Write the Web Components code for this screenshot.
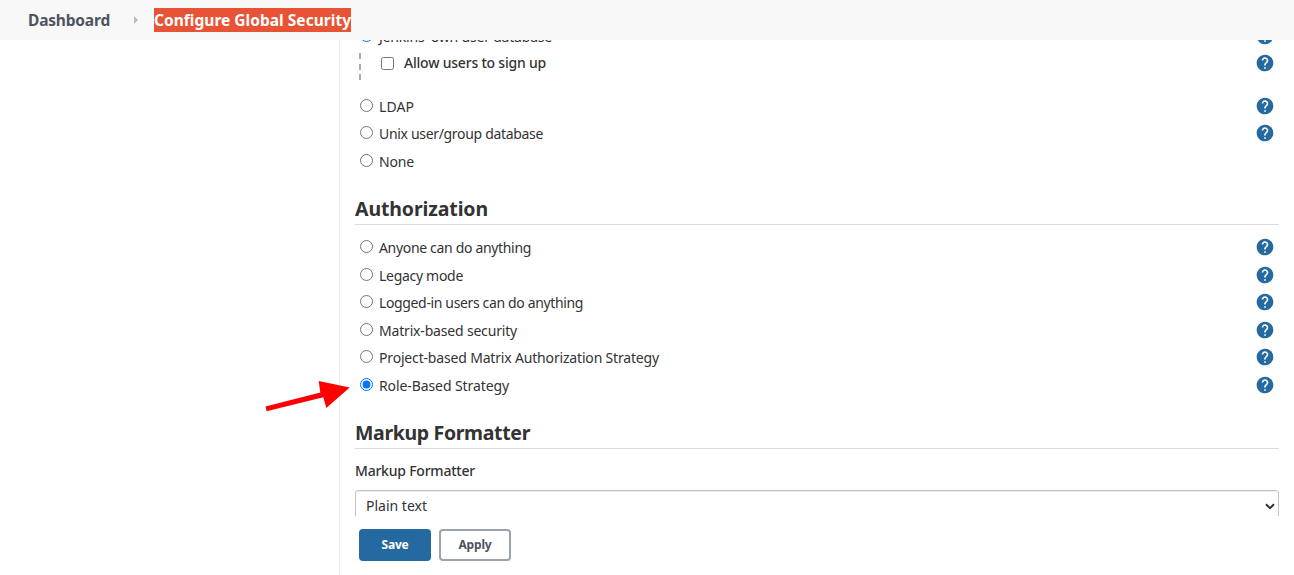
<!DOCTYPE html>
<html lang="en">
<head>
<meta charset="utf-8">
<title>Configure Global Security</title>
<style>
html,body{margin:0;height:100%;overflow:hidden;background:#fff}
body{font-family:"Noto Sans","Open Sans",sans-serif;color:#333;font-size:14px}
</style>
</head>
<body>
<security-page></security-page>
<script>
function define(name, html, ready) {
  const t = document.createElement('template');
  t.innerHTML = html;
  customElements.define(name, class extends HTMLElement {
    connectedCallback() {
      if (this.shadowRoot) return;
      this.attachShadow({mode: 'open'}).appendChild(t.content.cloneNode(true));
      if (ready) ready(this, this.shadowRoot);
    }
  });
}

/* A one-line text that tracks its letters to fill the width in `w`. */
define('fit-text', `<style>
:host{display:inline-block;white-space:nowrap;line-height:1.3}
</style><slot></slot>`, el => {
  const n = el.textContent.length;
  const natural = el.getBoundingClientRect().width;
  const w = Number(el.getAttribute('w'));
  if (w && natural) {
    el.style.letterSpacing = ((w - natural) / n) + 'px';
    el.style.width = w + 'px';
  }
});

define('help-icon', `<style>
:host{display:block;width:20px;height:20px;margin-bottom:.7px}
svg{display:block;width:100%;height:100%}
</style>
<svg viewBox="0 0 24 24" fill="#24699f"><path d="M12 2C6.48 2 2 6.48 2 12s4.48 10 10 10 10-4.48 10-10S17.52 2 12 2zm1 17h-2v-2h2v2zm2.07-7.75l-.9.92C13.45 12.9 13 13.5 13 15h-2v-.5c0-1.1.45-2.1 1.17-2.83l1.24-1.26c.37-.36.59-.86.59-1.41 0-1.1-.9-2-2-2s-2 .9-2 2H8c0-2.21 1.79-4 4-4s4 1.79 4 4c0 .88-.36 1.68-.93 2.25z"/></svg>`);

define('option-row', `<style>
:host{display:flex;align-items:center;height:27.6px;padding:0 4.2px 0 5px}
input{margin:-1.8px 6px 0 0;width:13px;height:13px;flex:none}
.label{flex:1;display:flex;padding-top:1.4px}
:host([check]) input{margin:0 10px 0 0}
:host([check]) .label{font-weight:500;padding-top:0}
:host([nohelp]) help-icon{display:none}
</style>
<input type="radio"><div class="label"><slot></slot></div><help-icon></help-icon>`, (el, root) => {
  const i = root.querySelector('input');
  if (el.hasAttribute('check')) i.type = 'checkbox';
  i.checked = el.hasAttribute('checked');
});

define('section-title', `<style>
:host{display:flex;align-items:center;box-sizing:border-box;height:33px;padding-top:2px;border-bottom:1px solid #dcdcdc;font-size:19.5px;font-weight:700}
</style><slot></slot>`);

define('top-breadcrumbs', `<style>
:host{display:flex;align-items:center;box-sizing:border-box;height:40px;padding-left:28px;background:#f8f8f8;font-size:15.5px;font-weight:700;color:#4d545d;flex:none;z-index:1}
svg{width:4px;height:8px;margin:0 16px 0 24px}
.current{height:24px;display:flex;align-items:center;background:#e95335;color:#fff}
</style>
<fit-text w="82">Dashboard</fit-text>
<svg viewBox="0 0 4 8"><path d="M0 0L4 4L0 8Z" fill="#bbb"/></svg>
<div class="current"><fit-text w="197">Configure Global Security</fit-text></div>`);

define('select-box', `<style>
:host{display:flex;align-items:center;justify-content:space-between;box-sizing:border-box;height:34px;padding:0 3px 2px 10px;border:1px solid #c3c3c3;border-radius:3px;box-shadow:inset 0 1px 1px #0001}
svg{width:10px;height:7px}
</style><slot></slot><svg viewBox="0 0 10 7"><path d="M1 1.2L5 5.2L9 1.2" fill="none" stroke="#333" stroke-width="2"/></svg>`);

define('push-button', `<style>
:host{display:flex;align-items:center;justify-content:center;box-sizing:border-box;width:72px;height:32px;border:2px solid #98a4ae;border-radius:4px;background:#fff;color:#4d545d;font-size:12px;font-weight:700}
:host([primary]){background:#24699f;border-color:#24699f;color:#fff}
</style><slot></slot>`);

define('pointer-arrow', `<style>
:host{display:block;position:absolute;left:264px;top:378px;width:88px;height:34px}
svg{display:block}
</style>
<svg width="88" height="34"><path d="M1.5 28.5L56.3 14.6L54.7 3L85.7 9.5L62.3 30L59.3 19.3L2.6 33.3Z" fill="#f00"/></svg>`);

define('security-page', `<style>
:host{display:flex;flex-direction:column;height:575px;position:relative}
.body{flex:1;display:flex;min-height:0}
aside{width:339px;flex:none;border-right:1px solid #ececec}
main{flex:1;min-width:0;display:flex;flex-direction:column;padding:0 15px}
.view{height:476px;overflow:hidden;flex:none}
.form{margin-top:-17px}
.nested{box-sizing:border-box;height:42.6px;margin-top:-1px;padding-left:21px;display:flex}
.dash{width:2px;height:27px;margin:3.4px 0 0 -17px;background:repeating-linear-gradient(#aaa 0 6px,transparent 6px 10.5px)}
.nested option-row{flex:1;padding-left:14px;margin-left:6px}
.auth{margin-top:17px}
.options{padding-top:8.7px}
.format{margin-top:16.8px}
.field{height:41px;display:flex;align-items:center;padding-top:3px;font-weight:500;box-sizing:border-box}
footer{display:flex;gap:8px;padding:13px 4px}
</style>
<top-breadcrumbs></top-breadcrumbs>
<div class="body"><aside></aside><main>
<div class="view"><div class="form">
<option-row checked><fit-text w="173">Jenkins' own user database</fit-text></option-row>
<div class="nested"><div class="dash"></div><option-row check><fit-text w="142">Allow users to sign up</fit-text></option-row></div>
<option-row><fit-text w="35">LDAP</fit-text></option-row>
<option-row><fit-text w="164">Unix user/group database</fit-text></option-row>
<option-row nohelp><fit-text w="35">None</fit-text></option-row>
<section-title class="auth"><fit-text w="133">Authorization</fit-text></section-title>
<div class="options">
<option-row><fit-text w="152">Anyone can do anything</fit-text></option-row>
<option-row><fit-text w="84">Legacy mode</fit-text></option-row>
<option-row><fit-text w="204">Logged-in users can do anything</fit-text></option-row>
<option-row><fit-text w="138">Matrix-based security</fit-text></option-row>
<option-row><fit-text w="280">Project-based Matrix Authorization Strategy</fit-text></option-row>
<option-row checked><fit-text w="130">Role-Based Strategy</fit-text></option-row>
</div>
<section-title class="format"><fit-text w="175">Markup Formatter</fit-text></section-title>
<div class="field"><fit-text w="120">Markup Formatter</fit-text></div>
<select-box><fit-text w="61">Plain text</fit-text></select-box>
</div></div>
<footer><push-button primary><fit-text w="27">Save</fit-text></push-button><push-button><fit-text w="33">Apply</fit-text></push-button></footer>
</main></div>
<pointer-arrow></pointer-arrow>`);
</script>
</body>
</html>
